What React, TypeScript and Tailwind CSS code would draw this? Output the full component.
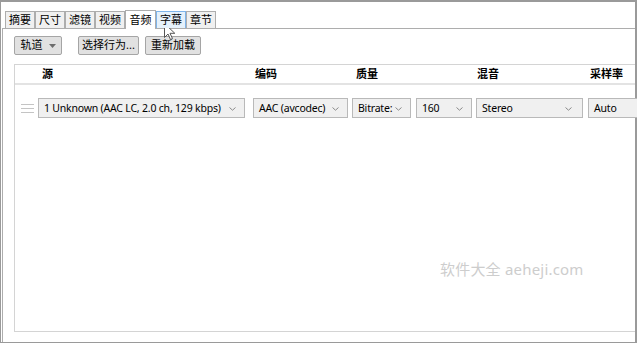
import React from "react";

const FONT = { fontFamily: '"Noto Sans", "Noto Sans CJK SC", sans-serif' };

function Chevron() {
  return (
    <svg width="7" height="4" viewBox="0 0 7 4" className="shrink-0">
      <path d="M0.5 0.5 L3.5 3.2 L6.5 0.5" fill="none" stroke="#8a8a8a" strokeWidth="1" />
    </svg>
  );
}

function Select({ w, text, chevronPad = 8 }: { w: number; text: string; chevronPad?: number }) {
  return (
    <div
      className="h-[20px] shrink-0 flex items-center justify-between border border-[#b9b9b9] bg-[#f0f0f0] pl-[5px] pt-[1px] text-[10.5px] tracking-[-0.2px] text-black leading-none"
      style={{ width: w, paddingRight: chevronPad }}
    >
      <span className="whitespace-nowrap">{text}</span>
      <Chevron />
    </div>
  );
}

function Tab({ label, state }: { label: string; state?: "active" | "hover" }) {
  if (state === "active") {
    return (
      <div className="h-[19px] w-[31px] -mb-px relative z-10 bg-white border border-b-0 border-[#adadad] flex items-center text-[11px] whitespace-nowrap justify-center">
        {label}
      </div>
    );
  }
  return (
    <div
      className={
        "h-[17px] w-[30px] border border-b-0 flex items-center justify-center text-[11px] whitespace-nowrap " +
        (state === "hover" ? "bg-[#e5f1fb] border-[#7eb4ea]" : "bg-[#f0f0f0] border-[#adadad]")
      }
    >
      {label}
    </div>
  );
}

export default function App() {
  return (
    <div className="w-[637px] h-[343px] overflow-hidden bg-white relative" style={FONT}>
      <div className="w-full h-full border-t-2 border-l border-r-2 border-b border-[#9a9a9a] flex flex-col pl-[1px]">
        {/* Tabs */}
        <div className="flex items-end h-[18px] mt-[8px] pl-[3px] relative z-10">
          <Tab label="摘要" />
          <Tab label="尺寸" />
          <Tab label="滤镜" />
          <Tab label="视频" />
          <Tab label="音频" state="active" />
          <Tab label="字幕" state="hover" />
          <Tab label="章节" />
        </div>
        {/* Panel */}
        <div className="flex-1 border-t border-l border-[#adadad] flex flex-col pl-[11px] pt-[7px]">
          <div className="flex items-center h-[19px]">
            <div className="h-[19px] w-[48px] rounded-[2px] border border-[#a5a5a5] bg-[#e1e1e1] flex items-center justify-center gap-[6px] text-[11px]">
              <span>轨道</span>
              <svg width="7" height="4" viewBox="0 0 7 4">
                <path d="M0 0 L7 0 L3.5 4 Z" fill="#6d6d6d" />
              </svg>
            </div>
            <div className="ml-[16px] h-[19px] w-[61px] rounded-[2px] border border-[#a5a5a5] bg-[#e1e1e1] flex items-center justify-center text-[11px]">
              选择行为...
            </div>
            <div className="ml-[6px] h-[19px] w-[56px] rounded-[2px] border border-[#a5a5a5] bg-[#e1e1e1] flex items-center justify-center text-[11px]">
              重新加载
            </div>
          </div>
          {/* List */}
          <div className="mt-[9px] h-[268px] border-t border-l border-b border-[#d4d4d4] flex flex-col">
            <div className="h-[20px] border-b-2 border-[#e3e3e3] flex items-center text-[11px] font-bold">
              <div className="w-[238px] pl-[27px] shrink-0">源</div>
              <div className="w-[99px] pl-[2px] shrink-0">编码</div>
              <div className="w-[121px] pl-[4px] shrink-0">质量</div>
              <div className="w-[112px] pl-[4px] shrink-0">混音</div>
              <div className="shrink-0 pl-[5px]">采样率</div>
            </div>
            <div className="flex items-center mt-[13px] pl-[6px]">
              <div className="w-[13px] flex flex-col gap-[3px] shrink-0">
                <div className="h-px bg-[#c4c4c4]" />
                <div className="h-px bg-[#c4c4c4]" />
                <div className="h-px bg-[#c4c4c4]" />
              </div>
              <div className="ml-[4px] flex items-center">
                <Select w={207} text="1 Unknown (AAC LC, 2.0 ch, 129 kbps)" />
                <div className="ml-[8px]">
                  <Select w={95} text="AAC (avcodec)" />
                </div>
                <div className="ml-[4px]">
                  <Select w={59} text="Bitrate:" />
                </div>
                <div className="ml-[5px]">
                  <Select w={56} text="160" />
                </div>
                <div className="ml-[4px]">
                  <Select w={107} text="Stereo" chevronPad={10} />
                </div>
                <div className="ml-[5px]">
                  <Select w={80} text="Auto" />
                </div>
              </div>
            </div>
          </div>
        </div>
      </div>

      {/* Watermark */}
      <div className="absolute left-[440px] top-[258px] text-[15px] text-[#cdcdcd] whitespace-nowrap tracking-[0.2px]" style={FONT}>
        软件大全 aeheji.com
      </div>

      {/* Cursor */}
      <svg className="absolute left-[164px] top-[23px]" width="12" height="18" viewBox="0 0 12 18">
        <path d="M0.5 0.5 L0.5 14.5 L4 11 L6.5 16.5 L8.5 15.5 L6 10.3 L10.8 10.3 Z" fill="#ffffff" stroke="#555" strokeWidth="1" strokeLinejoin="round" />
      </svg>
    </div>
  );
}
